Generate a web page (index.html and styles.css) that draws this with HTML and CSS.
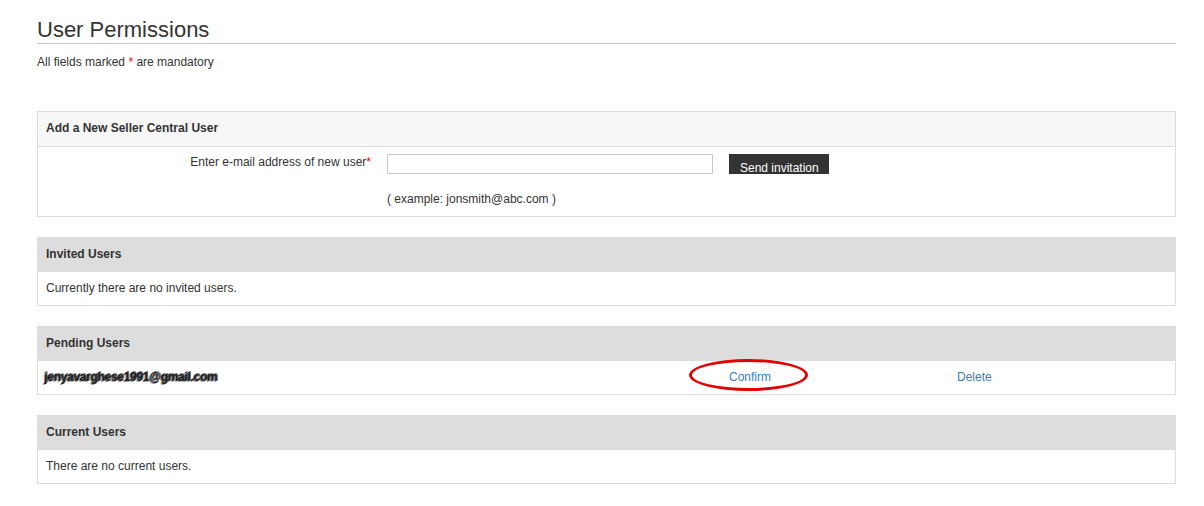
FILE: index.html
```html
<!DOCTYPE html>
<html>
<head>
<meta charset="utf-8">
<link rel="stylesheet" href="styles.css">
</head>
<body>
<div class="page">
  <h1 class="title">User Permissions</h1>
  <p class="note">All fields marked <span class="req">*</span> are mandatory</p>

  <section class="panel">
    <div class="panel-head light">Add a New Seller Central User</div>
    <div class="invite">
      <label class="invite-label" for="email">Enter e-mail address of new user<span class="req">*</span></label>
      <input class="invite-input" id="email" type="text">
      <button class="invite-btn" type="button">Send invitation</button>
      <div class="invite-example">( example: jonsmith@abc.com )</div>
    </div>
  </section>

  <section class="panel">
    <div class="panel-head">Invited Users</div>
    <div class="panel-body">Currently there are no invited users.</div>
  </section>

  <section class="panel">
    <div class="panel-head">Pending Users</div>
    <div class="pending-row">
      <span class="email">jenyavarghese1991@gmail.com</span>
      <span class="action"><a class="link" href="#">Confirm</a><span class="ring"></span></span>
      <span class="action"><a class="link" href="#">Delete</a></span>
    </div>
  </section>

  <section class="panel">
    <div class="panel-head">Current Users</div>
    <div class="panel-body">There are no current users.</div>
  </section>
</div>
</body>
</html>
```

FILE: styles.css
```css
* { box-sizing: border-box; }

body {
  margin: 0;
  background: #fff;
  font-family: "Liberation Sans", Arial, sans-serif;
  font-size: 12px;
  line-height: 18px;
  color: #333;
}

.page {
  width: 1139px;
  margin-left: 37px;
}

.title {
  margin: 17px 0 0;
  font-size: 22px;
  font-weight: normal;
  line-height: 26px;
  color: #333;
  border-bottom: 1px solid #c8c8c8;
}

.note {
  margin: 9px 0 0;
  line-height: 18px;
}

.req { color: #e00; }

.panel {
  border: 1px solid #ddd;
  margin-bottom: 20px;
}

.note + .panel { margin-top: 40px; }

.panel-head {
  background: #ddd;
  font-weight: bold;
  padding: 7px 8px 8px;
  border-bottom: 1px solid #ddd;
}

.panel-head.light {
  background: #f7f7f7;
  padding-bottom: 9px;
}

.panel-body {
  padding: 7px 8px 8px;
}

.invite {
  display: grid;
  grid-template-columns: 333px 326px 100px;
  column-gap: 16px;
  row-gap: 16px;
  padding: 7px 0 8px;
  align-items: start;
}

.invite-label {
  text-align: right;
  line-height: 18px;
  margin-top: -1px;
}

.invite-input {
  height: 20px;
  width: 326px;
  margin: 0;
  border: 1px solid #c8c8c8;
  background: #fff;
  font: inherit;
}

.invite-btn {
  height: 20px;
  width: 100px;
  margin: 0;
  padding: 6px 0 0 11px;
  border: 0;
  background: #333;
  color: #fff;
  font-family: inherit;
  font-size: 12px;
  line-height: 16px;
  text-align: left;
  overflow: hidden;
  white-space: nowrap;
}

.invite-example {
  grid-column: 2 / 4;
}

.pending-row {
  display: grid;
  grid-template-columns: 685px 228px 1fr;
  padding: 7px 0 8px 6px;
}

.email {
  font-weight: bold;
  color: #222;
  letter-spacing: -0.3px;
  text-shadow: 1px -1px 0 rgba(0, 0, 0, 0.5), -1px 1px 0 rgba(0, 0, 0, 0.4), 1px 0 0 rgba(0, 0, 0, 0.3);
}

.action { position: relative; }

.link {
  color: #3a7dc0;
  text-decoration: none;
}

.ring {
  position: absolute;
  left: -40px;
  top: -9px;
  width: 119px;
  height: 32px;
  border: 3px solid #e30000;
  border-radius: 50%;
}
```
